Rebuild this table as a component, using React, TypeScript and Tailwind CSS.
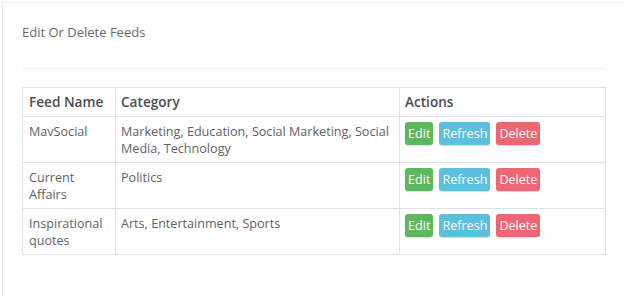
const feeds = [
  { name: 'MavSocial', category: 'Marketing, Education, Social Marketing, Social Media, Technology' },
  { name: 'Current Affairs', category: 'Politics' },
  { name: 'Inspirational quotes', category: 'Arts, Entertainment, Sports' },
]

function ActionButtons() {
  return (
    <div className="flex gap-[6px]">
      <button className="h-[23px] rounded-[3px] bg-[#5cb85c] px-[3px] text-[12.6px] leading-[23px] text-white shadow-[0_1px_1px_rgba(0,0,0,0.15)]">
        Edit
      </button>
      <button className="h-[23px] rounded-[3px] bg-[#5bc0de] px-[3px] text-[12.6px] leading-[23px] text-white shadow-[0_1px_1px_rgba(0,0,0,0.15)]">
        Refresh
      </button>
      <button className="h-[23px] rounded-[3px] bg-[#ee6672] px-[3px] text-[12.6px] leading-[23px] text-white shadow-[0_1px_1px_rgba(0,0,0,0.15)]">
        Delete
      </button>
    </div>
  )
}

export default function App() {
  return (
    <div
      className="min-h-[296px] bg-white pl-[2px] pt-[2px] text-[#676a6c]"
      style={{ fontFamily: '"Open Sans", "Liberation Sans", sans-serif' }}
    >
      <div className="min-h-[294px] border-l border-t border-[#e9ecef] pb-5 pl-[19px] pt-5">
        <div className="w-[583px]">
          <h5 className="text-[13px] font-normal leading-[18px] text-[#676a6c]">Edit Or Delete Feeds</h5>
          <hr className="mb-[18px] mt-[27px] border-t border-[#eef0f3]" />
          <table className="w-full table-fixed border-collapse border border-[#dfe2e5] text-[12.6px] leading-[17px] text-[#5f6264]">
            <colgroup>
              <col className="w-[93px]" />
              <col className="w-[284px]" />
              <col className="w-[206px]" />
            </colgroup>
            <thead>
              <tr>
                <th className="border border-[#dfe2e5] pb-[6px] pl-[6px] pr-[5px] pt-[5px] text-left text-[13.6px] font-semibold text-[#4a4d50]">
                  Feed Name
                </th>
                <th className="border border-[#dfe2e5] pb-[6px] pl-[5px] pr-[5px] pt-[5px] text-left text-[13.6px] font-semibold text-[#4a4d50]">
                  Category
                </th>
                <th className="border border-[#dfe2e5] pb-[6px] pl-[5px] pr-[5px] pt-[5px] text-left text-[13.6px] font-semibold text-[#4a4d50]">
                  Actions
                </th>
              </tr>
            </thead>
            <tbody>
              {feeds.map((feed) => (
                <tr key={feed.name}>
                  <td className="border border-[#dfe2e5] pb-[5px] pl-[6px] pr-[5px] pt-[6px] align-top">{feed.name}</td>
                  <td className="border border-[#dfe2e5] pb-[5px] pl-[5px] pr-[5px] pt-[6px] align-top">{feed.category}</td>
                  <td className="h-[46px] border border-[#dfe2e5] pb-[6px] pl-[5px] pr-[5px] pt-[5px] align-top">
                    <ActionButtons />
                  </td>
                </tr>
              ))}
            </tbody>
          </table>
        </div>
      </div>
    </div>
  )
}
